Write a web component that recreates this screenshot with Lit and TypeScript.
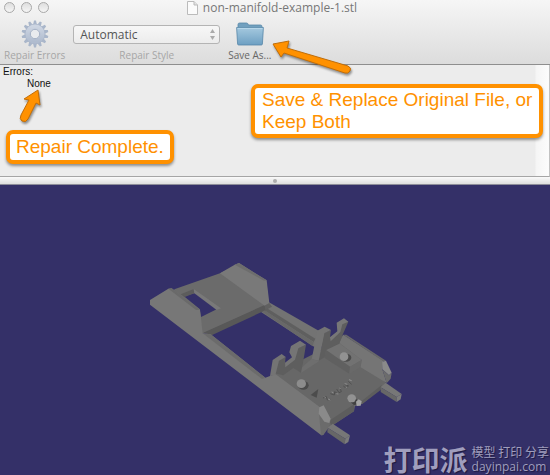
import { LitElement, html, css, svg } from "lit";
import { customElement, state } from "lit/decorators.js";

const GEAR_TEETH = Array.from({ length: 14 }, (_, i) => (i * 360) / 14);

@customElement("gear-icon")
class GearIcon extends LitElement {
  static styles = css`
    :host { display: block; }
    svg { display: block; width: 28px; height: 28px; }
  `;
  render() {
    return html`<svg viewBox="-14 -14 28 28" aria-hidden="true">
      <defs>
        <linearGradient id="g" x1="0" y1="0" x2="0" y2="1">
          <stop offset="0" stop-color="#cdd5e2" /><stop offset="1" stop-color="#b0bccf" />
        </linearGradient>
      </defs>
      <g fill="#a9b6ca">
        ${GEAR_TEETH.map((a) => svg`<path transform="rotate(${a})" d="M-2-9L-1-13.4H1L2-9Z" />`)}
      </g>
      <circle r="7.4" fill="none" stroke="url(#g)" stroke-width="5.2" />
      <circle r="4.700" fill="#e9ebee" stroke="#a3b0c5" stroke-width="1" />
      <circle r="10" fill="none" stroke="#a9b5c9" stroke-width=".7" />
    </svg>`;
  }
}

@customElement("folder-icon")
class FolderIcon extends LitElement {
  static styles = css`
    :host { display: block; }
    svg { display: block; width: 28px; height: 24px; }
  `;
  render() {
    return html`<svg viewBox="0 0 28 24" aria-hidden="true">
      <defs>
        <linearGradient id="f" x1="0" y1="0" x2="0" y2="1">
          <stop offset="0" stop-color="#a5c9df" /><stop offset="1" stop-color="#6d9fc2" />
        </linearGradient>
      </defs>
      <path d="M2 6V2.500Q2 1 3.500 1H10.500Q12 1 12.500 3H24.500Q26 3 26 4.500V8H2Z" fill="#71a0bf" stroke="#5988a8" stroke-width=".8" />
      <path d="M.6 5.500H27.400L26.400 22Q26.300 23 25.300 23H2.700Q1.700 23 1.600 22Z" fill="url(#f)" stroke="#5786a8" stroke-width=".8" />
      <path d="M1.500 6.400H26.500" stroke="#bfdced" stroke-width=".8" />
    </svg>`;
  }
}

@customElement("model-view")
class ModelView extends LitElement {
  static styles = css`
    :host { display: flex; justify-content: center; }
    svg { display: block; width: 100%; height: auto; aspect-ratio: 550 / 290; }
  `;
  render() {
    return html`<svg viewBox="0 185 550 290" role="img" aria-label="3D model">
      <g transform="translate(240 300) scale(.33333)">
        <!-- right rail -->
        <path fill="#737373" d="M85 6L92 10 312 136 222 140 62 35 74 18Z" />
        <path fill="#5f5f5f" d="M68 28L74 20 226 116 221 126Z" />
        <path fill="#686868" d="M62 32L68 27 221 127 218 139Z" />
      </g>
      <g transform="translate(140 255) scale(.33333)">
        <!-- rear plate with its window -->
        <path fill="#6b6b6b" fill-rule="evenodd" d="M103 103L240 55 290 30 388 143 375 152 188 236 100 130ZM132 124L168 113 230 163 183 186 179 162Z" />
        <path fill="#5c5c5c" d="M122 118L161 102 163 115 134 126Z" />
        <path fill="#797979" d="M161 102L243 160 230 165 163 115Z" />
        <path fill="#585858" d="M190 233L374 150 380 163 365 171 215 241Z" />
        <path fill="#797979" d="M240 55L284 29 297 24 380 76 388 144 374 152Z" />
        <path fill="#6d6d6d" d="M284 29L297 24 380 76 372 77Z" />
        <path fill="#606060" d="M374 152L388 144 396 155 376 166Z" />
      </g>
      <g transform="translate(240 300) scale(.33333)">
        <!-- front floor and left rail -->
        <path fill="#676767" d="M90 240L106 220 255 145 310 105 362 178 438 248 420 268 366 312 345 318 342 334 280 374 262 385 230 350Z" />
        <path fill="#5d5d5d" d="M268 362L342 313 342 334 275 378ZM366 302L425 255 422 270 366 313Z" />
        <path fill="#777" d="M-270 0L-215-34-205-35-120 29-112 100-88 103 76 233 106 222 240 322 250 405 244 406-270 14Z" />
        <path fill="#6a6a6a" d="M-215-34L-205-35-120 29-132 30Z" />
        <path fill="#6b6b6b" d="M-112 100L-88 103 76 233 66 237Z" />
        <!-- right wall -->
        <path fill="#757575" d="M297 128L310 104 430 182 427 208 440 249 362 202 365 180Z" />
        <path fill="#696969" d="M310 104L319 104 438 182 430 184Z" />
        <path fill="#8a8a8a" d="M427 185L438 182 455 218 447 226 427 208Z" />
        <path fill="#6c6c6c" d="M427 208L447 226 455 218 452 236 440 250Z" />
        <!-- left end cap -->
        <path fill="#6b6b6b" d="M237 340L268 365 272 357 268 380 250 405 243 406Z" />
        <path fill="#8a8a8a" d="M238 322L251 316 272 356 268 369 253 365 236 341Z" />
        <!-- pegs -->
        <path fill="#777" d="M422 262L437 248 485 282 470 291Z" />
        <path fill="#676767" d="M422 262L470 291 470 306 422 276Z" />
        <path fill="#7b7b7b" d="M470 291L485 282 482 298 470 306Z" />
        <path fill="#777" d="M263 383L278 371 330 406 316 416Z" />
        <path fill="#676767" d="M263 383L316 416 314 433 262 397Z" />
        <path fill="#7b7b7b" d="M316 416L330 406 325 426 314 433Z" />
        <!-- raised block -->
        <path fill="#727272" d="M258 150L298 130 365 180 330 200Z" />
        <path fill="#606060" d="M258 150L330 200 328 221 254 174Z" />
        <path fill="#696969" d="M330 200L365 180 360 202 328 221Z" />
        <!-- rear bracket -->
        <path fill="#5e5e5e" d="M236 182L252 98 273 90 270 112 292 96 304 68 325 65 308 104 298 131 258 150 254 172Z" />
        <path fill="#747474" d="M215 178L232 92 254 80 273 90 253 100 236 182Z" />
        <path fill="#777" d="M270 112L292 94 290 68 312 55 325 65 307 73 301 96 272 124Z" />
        <path fill="#6e6e6e" d="M180 207L215 176 237 184 184 218Z" />
        <!-- front bracket -->
        <path fill="#5e5e5e" d="M104 220L116 180 137 170 135 190 160 180 172 145 198 134 189 188 183 218 160 204 130 226Z" />
        <path fill="#747474" d="M90 228L98 180 125 162 137 171 117 182 106 226Z" />
        <path fill="#757575" d="M135 188L156 172 148 157 153 138 180 122 198 134 175 145 165 179 136 202Z" />
        <!-- studs -->
        <ellipse cx="318" cy="173" rx="16" ry="12" fill="#4b4b4b" />
        <ellipse cx="312" cy="170" rx="13" ry="13" fill="#929292" />
        <ellipse cx="190" cy="256" rx="16" ry="13" fill="#4b4b4b" />
        <ellipse cx="184" cy="251" rx="14" ry="13" fill="#8c8c8c" />
        <path fill="#414141" d="M322 298L350 298 358 312 342 315Z" />
        <ellipse cx="335" cy="295" rx="13" ry="12" fill="#929292" />
        <path fill="#a3a3a3" d="M348 305L356 298 365 304 362 317 350 318Z" />
        <path fill="#4c4c4c" d="M212 285L235 267 230 293Z" />
        <!-- embossed marks -->
        <g fill="none" stroke-width="3">
          <path stroke="#505050" d="M249 294l10-4 3 10 10-2M271 281l12 4 1-10 9 6M290 267l7 11 7-3-4-12M310 258l10 8 5-9-11-3M325 244l10 9" />
          <path stroke="#919191" d="M253 290l4 4M264 297l7 3M275 276l5 2M289 281l6 1M298 264l4 2M314 251l8 2M317 264l5-1M327 239l8 3" />
        </g>
      </g>
    </svg>`;
  }
}

@customElement("app-root")
class AppRoot extends LitElement {
  @state() private repairStyle = "Automatic";

  static styles = css`
    :host {
      display: flex;
      flex-direction: column;
      min-height: 100vh;
      background: #343068;
      font-family: "Liberation Sans", Arial, sans-serif;
    }
    * { box-sizing: border-box; }
    button { border: 0; padding: 0; background: none; font: inherit; color: inherit; }
    header {
      position: relative;
      background: linear-gradient(#f6f6f6, #dcdcdc);
      border-bottom: 1px solid #8e8e8e;
      padding-bottom: 2px;
      font-family: "Open Sans", "Noto Sans", sans-serif;
    }
    .titlebar {
      display: grid;
      grid-template-columns: 1fr auto 1fr;
      align-items: center;
      height: 15px;
      padding: 0 10px 0 4px;
    }
    .lights { display: flex; gap: 6px; }
    .light {
      width: 11px;
      height: 11px;
      border: 1px solid #a9a9a9;
      border-radius: 50%;
      background: linear-gradient(#dedede, #f5f5f5);
    }
    .title {
      display: flex;
      align-items: center;
      gap: 5px;
      margin: 0;
      font-size: 12px;
      line-height: 14px;
      font-weight: 400;
      color: #777;
    }
    .doc { display: block; width: 11px; height: 14px; }
    .toolbar { display: flex; gap: 8px; padding: 5px 4px 0; }
    .tool {
      display: flex;
      flex-direction: column;
      align-items: center;
      font-size: 10px;
      line-height: 14px;
      color: #a6a6a6;
      white-space: nowrap;
    }
    .tool.active { color: #666; }
    .face { display: flex; align-items: center; height: 28px; }
    .picker { position: relative; width: 147px; }
    .picker .face { align-self: stretch; }
    select {
      appearance: none;
      width: 100%;
      height: 19px;
      padding: 0 6px;
      border: 1px solid #b4b4b4;
      border-radius: 3px;
      background: linear-gradient(#f7f7f7, #ececec);
      font: 12px "Open Sans", sans-serif;
      color: #555;
    }
    .chevrons { position: absolute; right: 5px; top: 9px; width: 5px; height: 11px; pointer-events: none; }
    .report {
      position: relative;
      height: 112px;
      padding: 1px 3px;
      background: linear-gradient(to right, #ececec, #ececec calc(100% - 14px), #f5f5f5 calc(100% - 13px), #fcfcfc);
      border-right: 1px solid #c2c2c2;
      border-bottom: 1px solid #a5a5a5;
      font-size: 10px;
      line-height: 12px;
      color: #111;
    }
    h2, p { margin: 0; font-size: inherit; font-weight: 400; }
    .result { padding-left: 24px; }
    .callout {
      position: absolute;
      border: 4px solid #ff9100;
      border-radius: 7px;
      background: #fff;
      box-shadow: 0 2px 3px #0006;
      padding: 1px 7px;
      font-size: 19px;
      line-height: 22px;
      color: #ff9100;
      white-space: nowrap;
    }
    .done { left: 6px; top: 65px; padding: 2px 6px; }
    .save { left: 251px; top: 19px; }
    .arrow { position: absolute; overflow: visible; filter: drop-shadow(1px 2px 1px #0006); pointer-events: none; z-index: 1; }
    .arrow path { fill: #ff9100; stroke: #c06d08; stroke-width: 1; stroke-linejoin: round; }
    .to-none { left: 18px; top: 24px; width: 24px; height: 34px; }
    .to-save { left: 272px; top: 40px; width: 80px; height: 36px; }
    .splitter {
      display: flex;
      align-items: center;
      justify-content: center;
      height: 8px;
      background: linear-gradient(#fafafa, #dedede);
      border-bottom: 1px solid #8d8d99;
    }
    .grip { width: 4px; height: 4px; border-radius: 50%; background: #adadad; }
    .viewport { position: relative; flex: 1; background: #343068; }
    .mark {
      position: absolute;
      right: 1px;
      bottom: 0;
      display: flex;
      align-items: center;
      gap: 4px;
      font-family: "Open Sans", "Noto Sans CJK SC", sans-serif;
      color: #a09ebd;
      text-shadow: 1px 1px 1px #1b1840;
      white-space: nowrap;
    }
    .brand { font: 700 28px/32px "Noto Sans CJK SC", sans-serif; }
    .lines { display: flex; flex-direction: column; font-size: 12px; line-height: 15px; }
    .tagline { font-family: "Noto Sans CJK SC", sans-serif; }
  `;

  render() {
    return html`
      <header>
        <div class="titlebar">
          <div class="lights">
            <button class="light" aria-label="Close"></button>
            <button class="light" aria-label="Minimize"></button>
            <button class="light" aria-label="Zoom"></button>
          </div>
          <h1 class="title">
            <svg class="doc" viewBox="0 0 11 14" aria-hidden="true">
              <path d="M.5.5H7L10.500 4V13.500H.5Z" fill="#fbfbfb" stroke="#bbb" />
              <path d="M7 .5V4H10.500" fill="#e3e3e3" stroke="#bbb" />
            </svg>
            non-manifold-example-1.stl
          </h1>
        </div>
        <div class="toolbar">
          <button class="tool" disabled>
            <span class="face"><gear-icon></gear-icon></span>Repair Errors
          </button>
          <label class="tool picker">
            <span class="face">
              <select .value=${this.repairStyle}
                @change=${(e: Event) => (this.repairStyle = (e.target as HTMLSelectElement).value)}>
                <option>Automatic</option>
              </select>
              <svg class="chevrons" viewBox="0 0 5 11" aria-hidden="true">
                <path d="M0 4L2.500 0 5 4ZM0 7H5L2.500 11Z" fill="#aaa" />
              </svg>
            </span>
            Repair Style
          </label>
          <button class="tool active">
            <span class="face"><folder-icon></folder-icon></span>Save As...
          </button>
        </div>
        <svg class="arrow to-save" viewBox="0 0 80 36" aria-hidden="true">
          <path d="M1 4L17 1 15 8 76 26Q80 28 78 31 76 34 73 33L12 13 9 17Z" />
        </svg>
      </header>
      <section class="report">
        <h2>Errors:</h2>
        <p class="result">None</p>
        <svg class="arrow to-none" viewBox="0 0 24 34" aria-hidden="true">
          <path d="M20 1L22 16 18 14 10 30Q8 34 4 32 1 30 3 26L11 11 6 10Z" />
        </svg>
        <p class="callout done">Repair Complete.</p>
        <p class="callout save">Save &amp; Replace Original File, or<br />Keep Both</p>
      </section>
      <div class="splitter" role="separator"><span class="grip"></span></div>
      <main class="viewport">
        <model-view></model-view>
        <div class="mark">
          <span class="brand">打印派</span>
          <span class="lines"><span class="tagline">模型 打印 分享</span><span>dayinpai.com</span></span>
        </div>
      </main>
    `;
  }
}
